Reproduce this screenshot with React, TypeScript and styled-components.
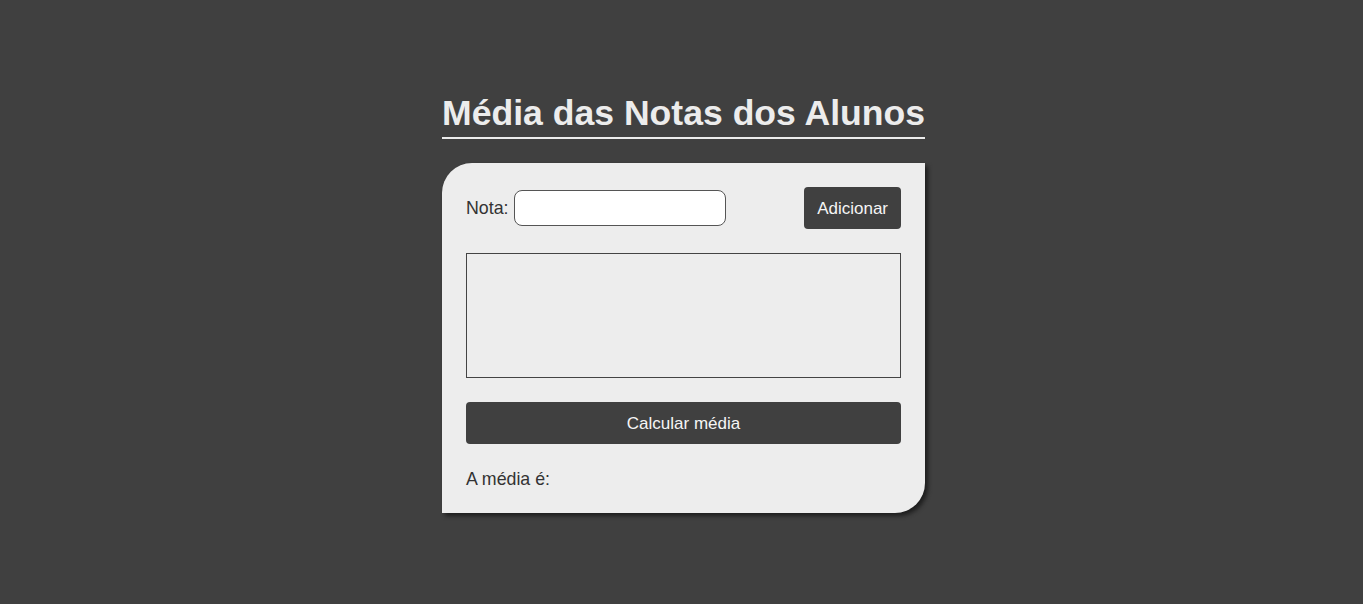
import React from "react";
import styled, { createGlobalStyle } from "styled-components";

const Global = createGlobalStyle`
  html, body { margin: 0; padding: 0; }
  body {
    background: #404040;
    font-family: "Liberation Sans", Arial, sans-serif;
  }
`;

const Page = styled.div`
  min-height: 604px;
  display: flex;
  align-items: center;
  justify-content: center;
  padding-left: 4px;
  padding-top: 2px;
  box-sizing: border-box;
`;

const Wrapper = styled.div`
  width: 483px;
  display: flex;
  flex-direction: column;
`;

const Title = styled.h1`
  margin: 0 0 24px;
  font-size: 35.6px;
  line-height: 41px;
  font-weight: bold;
  color: #ececec;
  text-align: center;
  padding-bottom: 3px;
  border-bottom: 2px solid #ececec;
  white-space: nowrap;
`;

const Card = styled.div`
  background: #ededed;
  border-radius: 30px 0 30px 0;
  padding: 24px;
  display: flex;
  flex-direction: column;
  box-shadow: 3px 3px 4px #1e1e1e;
`;

const Row = styled.div`
  display: flex;
  align-items: center;
  justify-content: space-between;
`;

const Field = styled.label`
  display: flex;
  align-items: center;
  gap: 5px;
  font-size: 17.8px;
  color: #333;
`;

const Input = styled.input`
  width: 212px;
  height: 36px;
  box-sizing: border-box;
  border: 1px solid #555;
  border-radius: 8px;
  background: #fff;
  outline: none;
`;

const Button = styled.button<{ $full?: boolean }>`
  height: 42px;
  padding: 2px 13px 0;
  width: ${(p) => (p.$full ? "100%" : "auto")};
  background: #404040;
  color: #f5f5f5;
  border: none;
  border-radius: 4px;
  font-family: "Liberation Sans", Arial, sans-serif;
  font-size: 17px;
  cursor: pointer;
`;

const ListBox = styled.div`
  margin: 24px 0;
  height: 125px;
  box-sizing: border-box;
  border: 1px solid #444;
`;

const Result = styled.p`
  margin: 25px 0 0;
  font-size: 17.8px;
  line-height: 20px;
  color: #333;
`;

export default function App() {
  return (
    <>
      <Global />
      <Page>
        <Wrapper>
          <Title>Média das Notas dos Alunos</Title>
          <Card>
            <Row>
              <Field>
                Nota:
                <Input type="text" />
              </Field>
              <Button>Adicionar</Button>
            </Row>
            <ListBox />
            <Button $full>Calcular média</Button>
            <Result>A média é:</Result>
          </Card>
        </Wrapper>
      </Page>
    </>
  );
}
